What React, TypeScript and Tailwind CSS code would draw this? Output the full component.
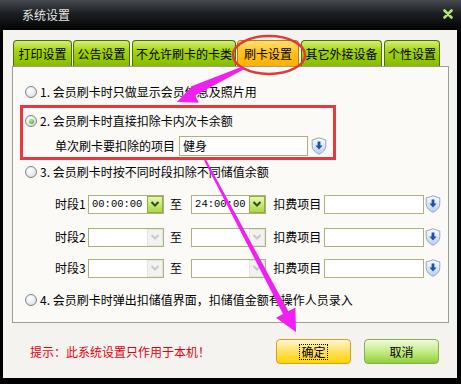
import React from "react";

const Radio = ({ checked = false }: { checked?: boolean }) => (
  <span className="relative inline-flex h-[12px] w-[12px] shrink-0 items-center justify-center rounded-full border border-[#7b8590] bg-[radial-gradient(circle_at_40%_35%,#ffffff_0%,#e8eaec_55%,#c4c8cc_100%)]">
    {checked && (
      <span className="h-[5px] w-[5px] rounded-full bg-[radial-gradient(circle_at_40%_35%,#b6f07a_0%,#3aa01a_100%)]" />
    )}
  </span>
);

const Shield = () => (
  <svg width="16" height="18" viewBox="0 0 16 18" className="shrink-0">
    <defs>
      <linearGradient id="sg" x1="0" y1="0" x2="0" y2="1">
        <stop offset="0" stopColor="#ffffff" />
        <stop offset="1" stopColor="#b9cfe8" />
      </linearGradient>
    </defs>
    <path d="M8 0.8 L14.8 3 L14.8 8.5 C14.8 13 11.5 15.6 8 17.2 C4.5 15.6 1.2 13 1.2 8.5 L1.2 3 Z" fill="url(#sg)" stroke="#8aa6c8" strokeWidth="1" />
    <path d="M6.6 4.5 H9.4 V8.6 H11.6 L8 12.6 L4.4 8.6 H6.6 Z" fill="#1f4fb0" />
  </svg>
);

const Select = ({ value, width, disabled = false }: { value?: string; width: string; disabled?: boolean }) => (
  <div className={`flex h-[19px] items-center justify-between border border-[#a9b37a] bg-white pl-[3px] ${width}`}>
    <span className="font-['Liberation_Mono',monospace] text-[10.5px] leading-none text-black">{value}</span>
    <span
      className={`flex h-[17px] w-[16px] items-center justify-center border ${
        disabled ? "border-[#e4e4e0] bg-[#f2f2f0]" : "border-[#8fb040] bg-[linear-gradient(#e8f8b0,#a8d848)]"
      }`}
    >
      <svg width="10" height="8" viewBox="0 0 10 8">
        <path d="M1.5 2 L5 5.5 L8.5 2" fill="none" stroke={disabled ? "#c8c8c8" : "#2c5010"} strokeWidth="2" />
      </svg>
    </span>
  </div>
);

const TimeRow = ({ label, mt, first = false }: { label: string; mt: string; first?: boolean }) => (
  <div className={`flex h-[20px] items-center pl-[35px] ${mt}`}>
    <span className="w-[33px] shrink-0">{label}</span>
    <Select width="w-[77px]" value={first ? "00:00:00" : ""} disabled={!first} />
    <span className="ml-[6px] w-[12px] shrink-0">至</span>
    <Select width="ml-[9px] w-[76px]" value={first ? "24:00:00" : ""} disabled={!first} />
    <span className="ml-[7px] w-[48px] shrink-0">扣费项目</span>
    <div className="ml-[3px] h-[19px] w-[101px] border border-[#a9b37a] bg-white" />
    <span className="ml-[1px]">
      <Shield />
    </span>
  </div>
);

const Tab = ({ label, w, active = false }: { label: string; w: string; active?: boolean }) => (
  <div
    className={`flex h-[26px] items-center justify-center rounded-t-[4px] border border-b-0 ${w} ${
      active
        ? "border-[#b88000] bg-[linear-gradient(#ffe27a,#ffc21e_45%,#ffb000)]"
        : "border-[#4f6e00] bg-[linear-gradient(#d4ee78,#a4d40c_40%,#86bc00)]"
    }`}
  >
    {label}
  </div>
);

export default function App() {
  return (
    <div className="relative flex h-[384px] w-[461px] flex-col bg-black pb-[6px] pl-[3px] pr-[4px] font-['Noto_Sans_CJK_SC',sans-serif] text-[12px] leading-none text-black">
      {/* title bar */}
      <div className="-ml-[3px] -mr-[4px] flex h-[30px] shrink-0 items-center justify-between bg-[linear-gradient(#464b52,#1b1e22_45%,#040404)] pl-[22px] pr-[8px]">
        <span className="text-[12px] text-[#e6e6e6]">系统设置</span>
        <svg width="10" height="10" viewBox="0 0 10 10" className="-mt-[2px]">
          <path d="M1.5 1.5 L8.5 8.5 M8.5 1.5 L1.5 8.5" stroke="#b4e86a" strokeWidth="2.6" strokeLinecap="round" />
        </svg>
      </div>

      {/* body */}
      <div className="flex flex-1 flex-col bg-[#f4f3ef] pt-[10px]">
        {/* tabs */}
        <div className="ml-[10px] flex items-end">
          <Tab label="打印设置" w="w-[59px]" />
          <Tab label="公告设置" w="ml-[1px] w-[57px]" />
          <Tab label="不允许刷卡的卡类" w="ml-[2px] w-[104px]" />
          <Tab label="刷卡设置" w="ml-[1px] w-[62px]" active />
          <Tab label="其它外接设备" w="ml-[2px] w-[81px]" />
          <Tab label="个性设置" w="ml-[2px] w-[56px]" />
        </div>

        {/* panel */}
        <div className="ml-[9px] flex h-[257px] w-[437px] flex-col border border-[#9c9c98] bg-[#fbfaf7] px-[7px] pt-[15px]">
          <div className="flex h-[20px] items-center gap-[3px] pl-[5px]">
            <Radio />
            <span>1. 会员刷卡时只做显示会员信息及照片用</span>
          </div>

          <div className="mt-[3px] h-[55px] w-[316px] border-[3px] border-[#e8383e] pt-[4px]">
            <div className="flex h-[18px] items-center gap-[3px] pl-[2px]">
              <Radio checked />
              <span>2. 会员刷卡时直接扣除卡内次卡余额</span>
            </div>
            <div className="mt-[6px] flex h-[20px] items-center pl-[32px]">
              <span className="w-[124px] shrink-0">单次刷卡要扣除的项目</span>
              <div className="flex h-[20px] w-[129px] items-center border border-[#a9b37a] bg-white pl-[3px]">健身</div>
              <span className="ml-[3px]">
                <Shield />
              </span>
            </div>
          </div>

          <div className="mt-[2px] flex h-[20px] items-center gap-[3px] pl-[5px]">
            <Radio />
            <span>3. 会员刷卡时按不同时段扣除不同储值余额</span>
          </div>

          <TimeRow label="时段1" mt="mt-[12px]" first />
          <TimeRow label="时段2" mt="mt-[13px]" />
          <TimeRow label="时段3" mt="mt-[11px]" />

          <div className="mt-[12px] flex h-[20px] items-center gap-[3px] pl-[5px]">
            <Radio />
            <span>4. 会员刷卡时弹出扣储值界面，扣储值金额有操作人员录入</span>
          </div>
        </div>

        {/* footer */}
        <div className="mt-[16px] flex h-[25px] items-center pl-[27px] pr-[18px]">
          <span className="flex-1 text-[#e8000e]">提示：此系统设置只作用于本机！</span>
          <button className="flex h-[25px] w-[75px] items-center justify-center rounded-[4px] border border-[#d0a028] bg-[linear-gradient(#fff6d0,#ffe060_50%,#ffd400)]">
            <span className="border border-dotted border-black px-[1px] py-[1px]">确定</span>
          </button>
          <button className="ml-[13px] flex h-[25px] w-[75px] items-center justify-center rounded-[4px] border border-[#84b050] bg-[linear-gradient(#f0fadc,#c4ec84_50%,#90d038)]">
            取消
          </button>
        </div>
      </div>

      {/* annotations */}
      <svg className="pointer-events-none absolute left-0 top-0" width="461" height="384" viewBox="0 0 461 384">
        <ellipse cx="269" cy="55" rx="36" ry="19" fill="none" stroke="#e23a34" strokeWidth="2.5" />
        <polygon points="243.6,69.4 242.4,66.6 192.1,86.1 177,102 198.9,102.7 195,95.5" fill="#f020f0" />
        <polygon points="205.9,159.5 204.1,160.5 283,314 276,317.7 296,332 295.4,307.5 288.4,311.2" fill="#f020f0" />
      </svg>
    </div>
  );
}
